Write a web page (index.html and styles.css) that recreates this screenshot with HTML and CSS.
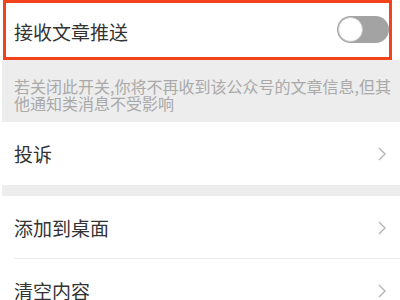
FILE: index.html
```html
<!DOCTYPE html>
<html lang="zh-CN">
<head>
<meta charset="utf-8">
<link rel="stylesheet" href="styles.css">
</head>
<body>
<div class="page">
  <div class="row row-top">
    <span class="label">接收文章推送</span>
    <span class="toggle"><span class="knob"></span></span>
    <div class="highlight"></div>
  </div>
  <div class="note">若关闭此开关,你将不再收到该公众号的文章信息,但其他通知类消息不受影响</div>
  <div class="row">
    <span class="label">投诉</span>
    <svg class="chev" width="8" height="14" viewBox="0 0 8 14"><polyline points="1,1 7,7 1,13" fill="none" stroke="#b4b4b4" stroke-width="1.4"/></svg>
  </div>
  <div class="gap"></div>
  <div class="row bordered">
    <span class="label">添加到桌面</span>
    <svg class="chev" width="8" height="14" viewBox="0 0 8 14"><polyline points="1,1 7,7 1,13" fill="none" stroke="#b4b4b4" stroke-width="1.4"/></svg>
  </div>
  <div class="row">
    <span class="label">清空内容</span>
    <svg class="chev" width="8" height="14" viewBox="0 0 8 14"><polyline points="1,1 7,7 1,13" fill="none" stroke="#b4b4b4" stroke-width="1.4"/></svg>
  </div>
</div>
</body>
</html>
```
FILE: styles.css
```css
html, body {
  margin: 0;
  padding: 0;
  background: #ffffff;
  overflow: hidden;
}
body {
  width: 400px;
  height: 300px;
  font-family: "Noto Sans CJK SC", "Noto Sans", sans-serif;
}
.page {
  margin-left: 2px;
}
.row {
  position: relative;
  height: 63px;
  display: flex;
  align-items: center;
  justify-content: space-between;
  padding: 0 14px 0 12px;
  background: #fff;
  box-sizing: border-box;
}
.row-top {
  height: 60px;
  padding-top: 4px;
  padding-right: 11px;
}
.label {
  font-size: 19px;
  color: #333333;
  line-height: 24px;
}
.toggle {
  position: relative;
  width: 52px;
  height: 27px;
  border-radius: 14px;
  background: #a3a3a3;
  margin-top: -5px;
  display: block;
}
.knob {
  position: absolute;
  left: 1px;
  top: 1px;
  width: 25px;
  height: 25px;
  border-radius: 50%;
  background: #fff;
  box-sizing: border-box;
  border: 1px solid #c8c8c8;
}
.highlight {
  position: absolute;
  left: 1px;
  top: 0;
  width: 389px;
  height: 60px;
  border: 3px solid #f3431c;
  box-sizing: border-box;
  pointer-events: none;
}
.note {
  background: #ededed;
  color: #a9a9a9;
  font-size: 16px;
  line-height: 17px;
  padding: 18px 6px 10px 12px;
  height: 62px;
  box-sizing: border-box;
}
.gap {
  height: 11px;
  background: #ededed;
}
.bordered::after {
  content: "";
  position: absolute;
  left: 12px;
  right: 0;
  bottom: 0;
  height: 1px;
  background: #ececec;
}
.chev {
  display: block;
}
```
